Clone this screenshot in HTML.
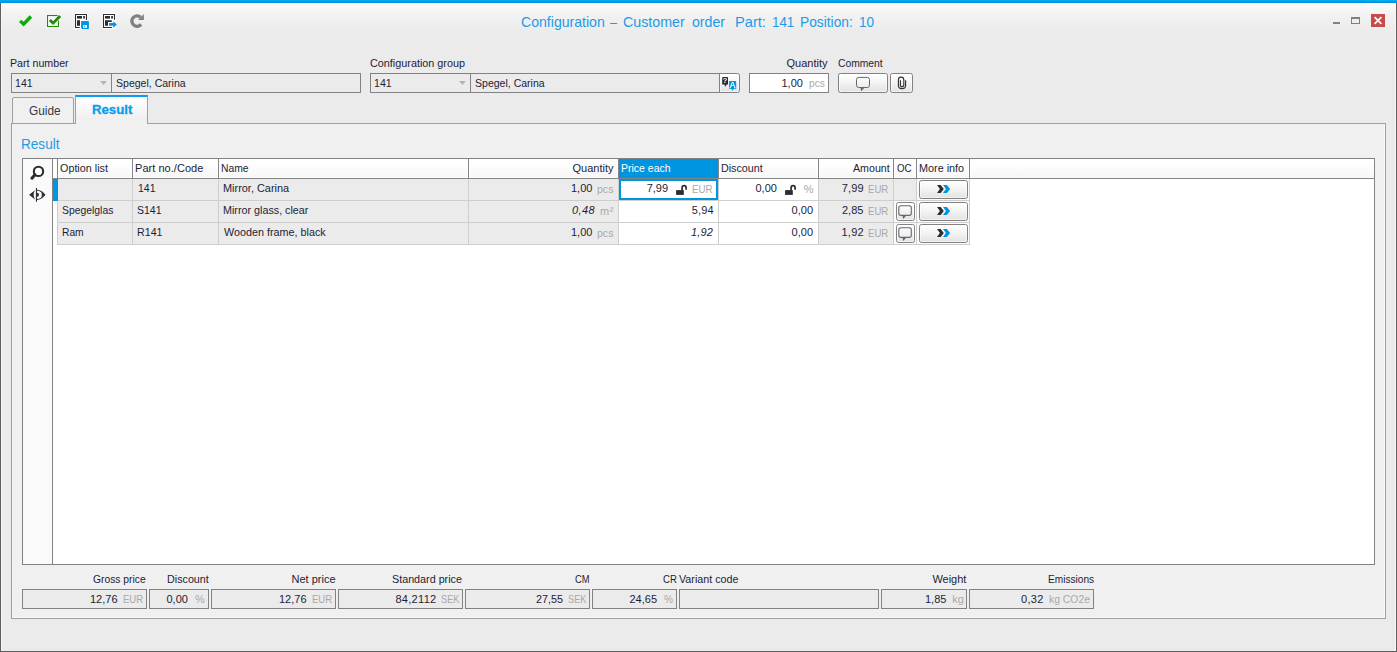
<!DOCTYPE html>
<html lang="en">
<head>
<meta charset="utf-8">
<title>Configuration – Customer order</title>
<style>
html,body{margin:0;padding:0;}
body{width:1397px;height:652px;overflow:hidden;background:#ebebeb;font-family:"Liberation Sans","DejaVu Sans",sans-serif;}
#win{position:relative;width:1397px;height:652px;overflow:hidden;background:#ebebeb;}
#win div,#win svg,#win span{position:absolute;box-sizing:border-box;}
.t{white-space:pre;line-height:20px;height:20px;transform-origin:0 0;}
#topbar{left:0;top:0;width:1397px;height:3px;background:linear-gradient(#00b4f2,#0086d9);}
#tgrad{left:1px;top:3px;width:1395px;height:38px;background:linear-gradient(#f9f9f9,#f5f5f5 18%,#f0f0f0 42%,#ececec 72%,#ebebeb);border-top:1px solid #fff;}
#bl{left:0;top:3px;width:1px;height:649px;background:#5e5e5e;}
#br{left:1396px;top:3px;width:1px;height:649px;background:#5e5e5e;}
#bb{left:0;top:651px;width:1397px;height:1px;background:#5e5e5e;}
.box{border:1px solid #828282;background:#ebebeb;height:20px;top:73px;}
.vd{width:1px;background:#828282;}
.btn{border:1px solid #828282;border-radius:2.5px;background:linear-gradient(#ffffff,#f6f6f6 40%,#e2e2e2);box-shadow:inset 0 0 0 1px rgba(255,255,255,0.55);}
#panel{left:11px;top:123px;width:1375px;height:496px;border:1px solid #a0a0a0;background:#f0f0f0;}
#tab1{left:12px;top:97px;width:62px;height:27px;border:1px solid #a0a0a0;border-radius:2px 2px 0 0;background:#f0f0f0;}
#tab2{left:75px;top:95px;width:73px;height:29px;border:1px solid #a0a0a0;border-top:2px solid #0a9bee;border-bottom:none;background:linear-gradient(#ffffff,#f0f0f0 80%);}
#grid{left:22px;top:158px;width:1353px;height:407px;border:1px solid #828282;background:#fff;}
#ghead{left:57px;top:159px;width:1317px;height:19px;background:linear-gradient(#ffffff,#fdfdfd 40%,#f6f6f6);box-shadow:inset 0 -1px 0 #fcfcfc;}
#gheadline{left:53px;top:178px;width:1321px;height:1px;background:#858585;}
.hl{height:1px;background:#cecece;left:57px;width:913px;}
.vl{width:1px;background:#cecece;top:179px;height:66px;}
.hv{width:1px;background:#858585;top:159px;height:19px;box-shadow:1px 0 0 #fefefe,-1px 0 0 #fefefe;}
.cg{background:#ebebeb;top:179px;height:65px;}
.sbox{border:1px solid #828282;background:#ebebeb;height:20px;top:589px;}

</style>
</head>
<body>
<div id="win">
<div id="tgrad"></div>
<div id="topbar"></div>
<div style="left:1px;top:3px;width:1px;height:648px;background:#f7f7f7;"></div><div style="left:1395px;top:3px;width:1px;height:648px;background:#f7f7f7;"></div>
<div id="bl"></div><div id="br"></div><div id="bb"></div>

<!-- form row -->
<div class="box" style="left:11px;width:350px;"></div>
<div class="vd" style="left:111px;top:74px;height:18px;"></div>
<div class="box" style="left:370px;width:350px;"></div>
<div class="vd" style="left:470px;top:74px;height:18px;"></div>
<div class="btn" style="left:719px;top:73px;width:21px;height:20px;border-radius:0 2.5px 2.5px 0;"></div>
<div class="box" style="left:749px;width:80px;background:#fff;"></div>
<div class="btn" style="left:838px;top:73px;width:50px;height:20px;"></div>
<div class="btn" style="left:890px;top:73px;width:23px;height:20px;"></div>

<!-- tabs -->
<div id="panel"></div>
<div style="left:1384px;top:124px;width:1px;height:494px;background:#f9f9f9;"></div><div style="left:12px;top:617px;width:1373px;height:1px;background:#f9f9f9;"></div>
<div id="tab1"></div>
<div id="tab2"></div>

<!-- grid -->
<div id="grid"></div>
<div style="left:23px;top:159px;width:29px;height:405px;background:#fafafa;"></div>
<div class="vd" style="left:52px;top:159px;height:405px;"></div>
<div id="ghead"></div>
<div id="gheadline"></div>
<div class="hv" style="left:57px;"></div>
<div class="hv" style="left:132px;"></div>
<div class="hv" style="left:218px;"></div>
<div class="hv" style="left:468px;"></div>
<div class="hv" style="left:618px;"></div>
<div class="hv" style="left:718px;"></div>
<div class="hv" style="left:818px;"></div>
<div class="hv" style="left:893px;"></div>
<div class="hv" style="left:916px;"></div>
<div class="hv" style="left:969px;"></div>
<div style="left:619px;top:159px;width:99px;height:19px;background:#0095e1;"></div>
<!-- cells -->
<div class="cg" style="left:58px;width:560px;"></div>
<div class="cg" style="left:819px;width:74px;"></div>
<div class="cg" style="left:894px;width:22px;height:21px;"></div>
<div style="left:894px;top:201px;width:22px;height:43px;background:#fbfbfb;"></div>
<div style="left:917px;top:179px;width:52px;height:65px;background:#fbfbfb;"></div>
<div class="vl" style="left:57px;"></div>
<div class="vl" style="left:132px;"></div>
<div class="vl" style="left:218px;"></div>
<div class="vl" style="left:468px;"></div>
<div class="vl" style="left:618px;"></div>
<div class="vl" style="left:718px;"></div>
<div class="vl" style="left:818px;"></div>
<div class="vl" style="left:893px;"></div>
<div class="vl" style="left:916px;"></div>
<div class="vl" style="left:969px;"></div>
<div class="hl" style="top:200px;"></div>
<div class="hl" style="top:222px;"></div>
<div class="hl" style="top:244px;"></div>
<div style="left:53px;top:179px;width:5px;height:22px;background:#0095e1;"></div>
<div style="left:619px;top:179px;width:99px;height:21px;border:2px solid #0095e1;background:#fff;"></div>
<!-- row buttons -->
<div class="btn" style="left:919px;top:180px;width:49px;height:19px;"></div>
<div class="btn" style="left:919px;top:202px;width:49px;height:19px;"></div>
<div class="btn" style="left:919px;top:224px;width:49px;height:19px;"></div>
<div class="btn" style="left:896px;top:202px;width:19px;height:19px;"></div>
<div class="btn" style="left:896px;top:224px;width:19px;height:19px;"></div>

<!-- summary boxes -->
<div class="sbox" style="left:22px;width:125px;"></div>
<div class="sbox" style="left:149px;width:60px;"></div>
<div class="sbox" style="left:211px;width:125px;"></div>
<div class="sbox" style="left:338px;width:125px;"></div>
<div class="sbox" style="left:465px;width:125px;"></div>
<div class="sbox" style="left:592px;width:85px;"></div>
<div class="sbox" style="left:679px;width:200px;"></div>
<div class="sbox" style="left:881px;width:86px;"></div>
<div class="sbox" style="left:969px;width:125px;"></div>

<!-- toolbar icons -->
<svg id="icons1" style="left:0;top:0;" width="160" height="40" viewBox="0 0 160 40">
  <path d="M19,22 L21.4,19.7 L23.6,21.8 L29.6,15.3 L32.2,17.8 L23.6,26.6 Z" fill="#05b000"/>
  <rect x="46" y="14" width="14" height="14" fill="#fdf8fd"/>
  <rect x="47.5" y="15.5" width="11" height="11" fill="#fbf4fb" stroke="#1f8e00" stroke-width="1.1"/>
  <path d="M48.9,20.9 L50.9,19.1 L53.1,21.2 L59,15 L61.2,17 L53.1,25 Z" fill="#1d8c00" stroke="#fbf6fb" stroke-width="1.4" paint-order="stroke"/>
  <g>
    <rect x="74" y="13" width="14" height="16" fill="#fff"/>
    <path d="M79.8,27.5 H75.5 V14.5 H86.5 V20" fill="none" stroke="#2a2e33" stroke-width="1.1"/>
    <rect x="77" y="16" width="5" height="2.6" fill="#2a2e33"/>
    <rect x="83.2" y="16" width="1.7" height="2.6" fill="#2a2e33"/>
    <rect x="77" y="20.2" width="3" height="5.6" fill="#2a2e33"/>
    <path d="M81.1,21 H88.4 L88.9,21.5 V28.9 H82 L81.1,28 Z" fill="#0095e1"/>
    <rect x="83" y="25.2" width="4" height="2.6" fill="#fff"/>
    <circle cx="84.6" cy="26.5" r="0.6" fill="#0095e1"/>
  </g>
  <g>
    <rect x="102" y="13" width="14" height="16" fill="#fff"/>
    <path d="M111.9,27.5 H103.5 V14.5 H114.5 V19.8" fill="none" stroke="#2a2e33" stroke-width="1.1"/>
    <rect x="105" y="16" width="5" height="2.6" fill="#2a2e33"/>
    <rect x="111.2" y="16" width="1.7" height="2.6" fill="#2a2e33"/>
    <path d="M105,20.2 H111.8 V22 H108 V25.8 H105 Z" fill="#2a2e33"/>
    <path d="M109.1,23.1 H113.4 V21 L116.7,24.4 L113.4,27.9 V25.7 H109.1 Z" fill="#0095e1"/>
  </g>
  <g>
    <path d="M140.6,17.3 A5.2,5.2 0 1 0 141.1,24.4" fill="none" stroke="#808080" stroke-width="3.3" stroke-linecap="butt"/>
    <path d="M143.9,14 V20 H138 Z" fill="#808080"/>
  </g>
</svg>
<!-- window buttons -->
<div style="left:1333px;top:22px;width:7px;height:2px;background:#808080;"></div>
<div style="left:1351px;top:17px;width:9px;height:7px;border:1px solid #808080;border-top-width:2px;"></div>
<div style="left:1371px;top:14px;width:14px;height:13px;background:#c84b4b;"></div>
<svg style="left:1371px;top:14px;" width="14" height="13" viewBox="0 0 14 13"><path d="M3.6,3.1 L10.4,9.9 M10.4,3.1 L3.6,9.9" stroke="#fff" stroke-width="1.7" fill="none"/></svg>

<!-- dropdown arrows -->
<svg style="left:99px;top:80px;" width="9" height="6" viewBox="0 0 9 6"><path d="M1,1 H8 L4.5,5 Z" fill="#b4b4b4"/></svg>
<svg style="left:458px;top:80px;" width="9" height="6" viewBox="0 0 9 6"><path d="M1,1 H8 L4.5,5 Z" fill="#b4b4b4"/></svg>

<!-- help/translate icon -->
<svg style="left:720px;top:74px;will-change:transform;" width="19" height="18" viewBox="720 74 19 18">
  <path d="M723.2,77.1 H727 Q728,77.1 728,78.1 V84.4 H726.6 L725.4,86.8 L724.3,84.4 H722.2 V78.1 Q722.2,77.1 723.2,77.1 Z" fill="#262a2e"/>
  <text x="725.1" y="83.3" font-family="Liberation Sans, sans-serif" font-size="7.5" font-weight="bold" fill="#fff" text-anchor="middle">?</text>
  <path d="M729.1,81 H735.2 Q736.2,81 736.2,82 V88.9 H733.7 L732.5,90.8 L731.4,88.9 H729.1 Z" fill="#0095e1"/>
  <text x="732.65" y="88.1" font-family="Liberation Sans, sans-serif" font-size="8.6" fill="#fff" stroke="#fff" stroke-width="0.25" text-anchor="middle">A</text>
</svg>

<!-- comment + attach icons -->
<svg style="left:838px;top:73px;" width="76" height="20" viewBox="838 73 76 20">
  <path d="M858.7,77.4 H867.3 Q869.5,77.4 869.5,79.6 V85.3 Q869.5,87.5 867.3,87.5 H858.7 Q856.5,87.5 856.5,85.3 V79.6 Q856.5,77.4 858.7,77.4 Z" fill="none" stroke="#626870" stroke-width="1"/>
  <path d="M860.4,87.5 L861.2,91.2 L864.6,87.5 Z" fill="#626870"/>
  <path d="M905.6,80.2 V85.6 A3.6,3.1 0 0 1 898.4,85.6 V79.9 A2.7,2.8 0 0 1 903.8,79.9 V85.2 A1.7,1.4 0 0 1 900.4,85.2 V80.2" fill="none" stroke="#2e3237" stroke-width="1.15"/>
</svg>

<!-- grid left toolbar icons -->
<svg style="left:23px;top:159px;" width="29" height="50" viewBox="23 159 29 50">
  <circle cx="38.5" cy="171.4" r="4.65" fill="#fff" stroke="#2a2e33" stroke-width="2.1"/>
  <path d="M35,174.8 L31.9,178.2" stroke="#2a2e33" stroke-width="3.1" stroke-linecap="round"/>
  <path d="M29.1,194.8 L35,190.2 Q32.3,194.8 35,199.5 Z" fill="#2a2e33"/>
  <rect x="35.9" y="188" width="1.1" height="13.8" fill="#2a2e33"/>
  <path d="M37,190.2 Q41.5,190.4 44.8,194.8 Q41.5,199.3 37,199.5" fill="none" stroke="#2a2e33" stroke-width="1.05"/>
  <path d="M45,194.8 L40.9,191.2 Q42.8,194.8 40.9,198.4 Z" fill="#2a2e33"/>
  <path d="M37,192.8 A2,2 0 0 1 37,196.8 Z" fill="#2a2e33"/>
</svg>

<!-- lock icons -->
<svg style="left:675px;top:184px;" width="13" height="12" viewBox="675 184 13 12">
  <rect x="676.1" y="190.1" width="7.7" height="4.8" fill="#2a2e33"/>
  <path d="M682.1,190.4 V187.8 A2,2.1 0 0 1 686.1,187.8 V189.8" fill="none" stroke="#2a2e33" stroke-width="1.7"/>
</svg>
<svg style="left:784px;top:184px;" width="13" height="12" viewBox="675 184 13 12">
  <rect x="676.1" y="190.1" width="7.7" height="4.8" fill="#2a2e33"/>
  <path d="M682.1,190.4 V187.8 A2,2.1 0 0 1 686.1,187.8 V189.8" fill="none" stroke="#2a2e33" stroke-width="1.7"/>
</svg>
<svg style="left:896px;top:180px;" width="72" height="19" viewBox="896 202 72 19">
  <path d="M937,207 H940.7 L943.8,211 L940.7,215 H937 L939.9,211 Z" fill="#2a2e33"/>
  <path d="M943,207 H946.9 L950.1,211 L946.9,215 H943 L945.9,211 Z" fill="#0095e1"/>
</svg>
<svg style="left:896px;top:202px;" width="72" height="19" viewBox="896 202 72 19">
  <path d="M900.9,205.7 H909.2 Q911.3,205.7 911.3,207.8 V213.3 Q911.3,215.4 909.2,215.4 H900.9 Q898.8,215.4 898.8,213.3 V207.8 Q898.8,205.7 900.9,205.7 Z" fill="none" stroke="#626870" stroke-width="1.1"/>
  <path d="M902.4,215.4 L903.2,219 L906.4,215.4 Z" fill="#626870"/>
  <path d="M937,207 H940.7 L943.8,211 L940.7,215 H937 L939.9,211 Z" fill="#2a2e33"/>
  <path d="M943,207 H946.9 L950.1,211 L946.9,215 H943 L945.9,211 Z" fill="#0095e1"/>
</svg>
<svg style="left:896px;top:224px;" width="72" height="19" viewBox="896 202 72 19">
  <path d="M900.9,205.7 H909.2 Q911.3,205.7 911.3,207.8 V213.3 Q911.3,215.4 909.2,215.4 H900.9 Q898.8,215.4 898.8,213.3 V207.8 Q898.8,205.7 900.9,205.7 Z" fill="none" stroke="#626870" stroke-width="1.1"/>
  <path d="M902.4,215.4 L903.2,219 L906.4,215.4 Z" fill="#626870"/>
  <path d="M937,207 H940.7 L943.8,211 L940.7,215 H937 L939.9,211 Z" fill="#2a2e33"/>
  <path d="M943,207 H946.9 L950.1,211 L946.9,215 H943 L945.9,211 Z" fill="#0095e1"/>
</svg>

<span class="t" id="t0" style="left:521.40px;top:12.00px;font-size:15px;color:#1e9ae6;transform:scaleX(0.9390);">Configuration </span>
<span class="t" id="t1" style="left:610.40px;top:12.00px;font-size:15px;color:#1e9ae6;transform:scaleX(0.8333);">– </span>
<span class="t" id="t2" style="left:622.95px;top:12.00px;font-size:15px;color:#1e9ae6;transform:scaleX(0.9492);">Customer </span>
<span class="t" id="t3" style="left:691.79px;top:12.00px;font-size:15px;color:#1e9ae6;transform:scaleX(0.9435);">order  </span>
<span class="t" id="t4" style="left:735.10px;top:12.00px;font-size:15px;color:#1e9ae6;transform:scaleX(0.9767);">Part: </span>
<span class="t" id="t5" style="left:771.78px;top:12.00px;font-size:15px;color:#1e9ae6;transform:scaleX(0.8880);">141 </span>
<span class="t" id="t6" style="left:799.80px;top:12.00px;font-size:15px;color:#1e9ae6;transform:scaleX(0.9171);">Position: </span>
<span class="t" id="t7" style="left:858.70px;top:12.00px;font-size:15px;color:#1e9ae6;transform:scaleX(0.8994);">10</span>
<span class="t" id="t8" style="left:9.60px;top:53.00px;font-size:11px;color:#1d1d36;transform:scaleX(0.9683);">Part number</span>
<span class="t" id="t9" style="left:369.85px;top:53.00px;font-size:11px;color:#1d1d36;transform:scaleX(0.9834);">Configuration group</span>
<span class="t" id="t10" style="left:786.57px;top:53.00px;font-size:11px;color:#1d1d36;">Quantity</span>
<span class="t" id="t11" style="left:838.00px;top:53.00px;font-size:11px;color:#1d1d36;transform:scaleX(0.9375);">Comment</span>
<span class="t" id="t12" style="left:14.90px;top:73.00px;font-size:11px;color:#1d1d36;transform:scaleX(0.9608);">141</span>
<span class="t" id="t13" style="left:115.85px;top:73.00px;font-size:11px;color:#1d1d36;transform:scaleX(0.9573);">Spegel, Carina</span>
<span class="t" id="t14" style="left:373.90px;top:73.00px;font-size:11px;color:#1d1d36;transform:scaleX(0.9608);">141</span>
<span class="t" id="t15" style="left:474.85px;top:73.00px;font-size:11px;color:#1d1d36;transform:scaleX(0.9573);">Spegel, Carina</span>
<span class="t" id="t16" style="left:781.50px;top:73.00px;font-size:11px;color:#1d1d36;">1,00</span>
<span class="t" id="t17" style="left:809.22px;top:73.00px;font-size:11px;color:#a9a9a9;transform:scaleX(0.9245);">pcs</span>
<span class="t" id="t18" style="left:28.50px;top:100.50px;font-size:12px;color:#343a46;transform:scaleX(0.9844);">Guide</span>
<span class="t" id="t19" style="left:92.48px;top:100.00px;font-size:12.5px;color:#0c9bec;transform:scaleX(1.0557);font-weight:bold;-webkit-text-stroke:0.3px #0c9bec;">Result</span>
<span class="t" id="t20" style="left:20.85px;top:133.50px;font-size:15px;color:#1e9ae6;transform:scaleX(0.9049);">Result</span>
<span class="t" id="t21" style="left:59.75px;top:158.00px;font-size:11px;color:#1d1d36;transform:scaleX(0.9797);">Option list</span>
<span class="t" id="t22" style="left:135.00px;top:158.00px;font-size:11px;color:#1d1d36;letter-spacing:0.042px;">Part no./Code</span>
<span class="t" id="t23" style="left:221.10px;top:158.00px;font-size:11px;color:#1d1d36;transform:scaleX(0.9383);">Name</span>
<span class="t" id="t24" style="left:572.50px;top:158.00px;font-size:11px;color:#1d1d36;">Quantity</span>
<span class="t" id="t25" style="left:621.45px;top:158.00px;font-size:11px;color:#fff;transform:scaleX(0.9534);">Price each</span>
<span class="t" id="t26" style="left:721.40px;top:158.00px;font-size:11px;color:#1d1d36;transform:scaleX(0.9741);">Discount</span>
<span class="t" id="t27" style="left:853.00px;top:158.00px;font-size:11px;color:#1d1d36;transform:scaleX(0.9684);">Amount</span>
<span class="t" id="t28" style="left:897.00px;top:158.00px;font-size:11px;color:#1d1d36;transform:scaleX(0.8814);">OC</span>
<span class="t" id="t29" style="left:918.90px;top:158.00px;font-size:11px;color:#1d1d36;transform:scaleX(0.9844);">More info</span>
<span class="t" id="t30" style="left:137.50px;top:178.00px;font-size:11px;color:#1d1d36;transform:scaleX(0.9548);">141</span>
<span class="t" id="t31" style="left:223.00px;top:178.00px;font-size:11px;color:#1d1d36;transform:scaleX(0.9925);">Mirror, Carina</span>
<span class="t" id="t32" style="left:571.00px;top:178.00px;font-size:11px;color:#1d1d36;">1,00</span>
<span class="t" id="t33" style="left:597.00px;top:179.00px;font-size:11px;color:#a9a9a9;transform:scaleX(0.9576);">pcs</span>
<span class="t" id="t34" style="left:646.70px;top:178.00px;font-size:11px;color:#1d1d36;">7,99</span>
<span class="t" id="t35" style="left:692.30px;top:179.00px;font-size:11px;color:#a9a9a9;transform:scaleX(0.8844);">EUR</span>
<span class="t" id="t36" style="left:755.50px;top:178.00px;font-size:11px;color:#1d1d36;">0,00</span>
<span class="t" id="t37" style="left:803.70px;top:179.00px;font-size:11px;color:#a9a9a9;">%</span>
<span class="t" id="t38" style="left:841.85px;top:178.00px;font-size:11px;color:#1d1d36;letter-spacing:0.133px;">7,99</span>
<span class="t" id="t39" style="left:867.55px;top:179.00px;font-size:11px;color:#a9a9a9;transform:scaleX(0.8748);">EUR</span>
<span class="t" id="t40" style="left:62.00px;top:200.00px;font-size:11px;color:#1d1d36;transform:scaleX(0.9444);">Spegelglas</span>
<span class="t" id="t41" style="left:136.75px;top:200.00px;font-size:11px;color:#1d1d36;transform:scaleX(0.9561);">S141</span>
<span class="t" id="t42" style="left:223.00px;top:200.00px;font-size:11px;color:#1d1d36;transform:scaleX(0.9770);">Mirror glass, clear</span>
<span class="t" id="t43" style="left:571.90px;top:200.00px;font-size:11px;color:#1d1d36;letter-spacing:0.433px;font-style:italic;">0,48</span>
<span class="t" id="t44" style="left:600.00px;top:201.00px;font-size:11px;color:#a9a9a9;letter-spacing:0.500px;">m²</span>
<span class="t" id="t45" style="left:691.75px;top:200.00px;font-size:11px;color:#1d1d36;letter-spacing:0.167px;">5,94</span>
<span class="t" id="t46" style="left:791.62px;top:200.00px;font-size:11px;color:#1d1d36;">0,00</span>
<span class="t" id="t47" style="left:842.00px;top:200.00px;font-size:11px;color:#1d1d36;">2,85</span>
<span class="t" id="t48" style="left:867.55px;top:201.00px;font-size:11px;color:#a9a9a9;transform:scaleX(0.8748);">EUR</span>
<span class="t" id="t49" style="left:62.00px;top:222.00px;font-size:11px;color:#1d1d36;transform:scaleX(0.9333);">Ram</span>
<span class="t" id="t50" style="left:137.10px;top:222.00px;font-size:11px;color:#1d1d36;transform:scaleX(0.9692);">R141</span>
<span class="t" id="t51" style="left:223.50px;top:222.00px;font-size:11px;color:#1d1d36;transform:scaleX(0.9808);">Wooden frame, black</span>
<span class="t" id="t52" style="left:571.00px;top:222.00px;font-size:11px;color:#1d1d36;">1,00</span>
<span class="t" id="t53" style="left:597.00px;top:223.00px;font-size:11px;color:#a9a9a9;transform:scaleX(0.9576);">pcs</span>
<span class="t" id="t54" style="left:691.00px;top:222.00px;font-size:11px;color:#1d1d36;letter-spacing:0.167px;font-style:italic;">1,92</span>
<span class="t" id="t55" style="left:791.62px;top:222.00px;font-size:11px;color:#1d1d36;">0,00</span>
<span class="t" id="t56" style="left:841.50px;top:222.00px;font-size:11px;color:#1d1d36;letter-spacing:0.233px;">1,92</span>
<span class="t" id="t57" style="left:867.55px;top:223.00px;font-size:11px;color:#a9a9a9;transform:scaleX(0.8748);">EUR</span>
<span class="t" id="t58" style="left:93.25px;top:569.00px;font-size:11px;color:#1d1d36;transform:scaleX(0.9375);">Gross price</span>
<span class="t" id="t59" style="left:166.50px;top:569.00px;font-size:11px;color:#1d1d36;transform:scaleX(0.9765);">Discount</span>
<span class="t" id="t60" style="left:291.50px;top:569.00px;font-size:11px;color:#1d1d36;">Net price</span>
<span class="t" id="t61" style="left:391.85px;top:569.00px;font-size:11px;color:#1d1d36;transform:scaleX(0.9775);">Standard price</span>
<span class="t" id="t62" style="left:575.00px;top:569.00px;font-size:11px;color:#1d1d36;transform:scaleX(0.8529);">CM</span>
<span class="t" id="t63" style="left:662.50px;top:569.00px;font-size:11px;color:#1d1d36;transform:scaleX(0.8710);">CR</span>
<span class="t" id="t64" style="left:679.00px;top:569.00px;font-size:11px;color:#1d1d36;transform:scaleX(0.9754);">Variant code</span>
<span class="t" id="t65" style="left:932.38px;top:569.00px;font-size:11px;color:#1d1d36;">Weight</span>
<span class="t" id="t66" style="left:1047.50px;top:569.00px;font-size:11px;color:#1d1d36;transform:scaleX(0.9192);">Emissions</span>
<span class="t" id="t67" style="left:90.00px;top:589.00px;font-size:11px;color:#1d1d36;">12,76</span>
<span class="t" id="t68" style="left:123.10px;top:589.00px;font-size:11px;color:#a9a9a9;transform:scaleX(0.8667);">EUR</span>
<span class="t" id="t69" style="left:166.50px;top:589.00px;font-size:11px;color:#1d1d36;">0,00</span>
<span class="t" id="t70" style="left:195.00px;top:589.00px;font-size:11px;color:#a9a9a9;">%</span>
<span class="t" id="t71" style="left:279.00px;top:589.00px;font-size:11px;color:#1d1d36;">12,76</span>
<span class="t" id="t72" style="left:312.10px;top:589.00px;font-size:11px;color:#a9a9a9;transform:scaleX(0.8667);">EUR</span>
<span class="t" id="t73" style="left:395.44px;top:589.00px;font-size:11px;color:#1d1d36;letter-spacing:0.297px;">84,2112</span>
<span class="t" id="t74" style="left:441.00px;top:589.00px;font-size:11px;color:#a9a9a9;transform:scaleX(0.8372);">SEK</span>
<span class="t" id="t75" style="left:535.50px;top:589.00px;font-size:11px;color:#1d1d36;transform:scaleX(0.9818);">27,55</span>
<span class="t" id="t76" style="left:568.00px;top:589.00px;font-size:11px;color:#a9a9a9;transform:scaleX(0.8372);">SEK</span>
<span class="t" id="t77" style="left:629.50px;top:589.00px;font-size:11px;color:#1d1d36;">24,65</span>
<span class="t" id="t78" style="left:664.10px;top:589.00px;font-size:11px;color:#a9a9a9;transform:scaleX(0.9200);">%</span>
<span class="t" id="t79" style="left:925.00px;top:589.00px;font-size:11px;color:#1d1d36;">1,85</span>
<span class="t" id="t80" style="left:952.20px;top:589.00px;font-size:11px;color:#a9a9a9;">kg</span>
<span class="t" id="t81" style="left:1021.00px;top:589.00px;font-size:11px;color:#1d1d36;letter-spacing:0.333px;">0,32</span>
<span class="t" id="t82" style="left:1048.60px;top:589.00px;font-size:11px;color:#a9a9a9;transform:scaleX(0.9442);">kg CO2e</span>
</div>
</body>
</html>
